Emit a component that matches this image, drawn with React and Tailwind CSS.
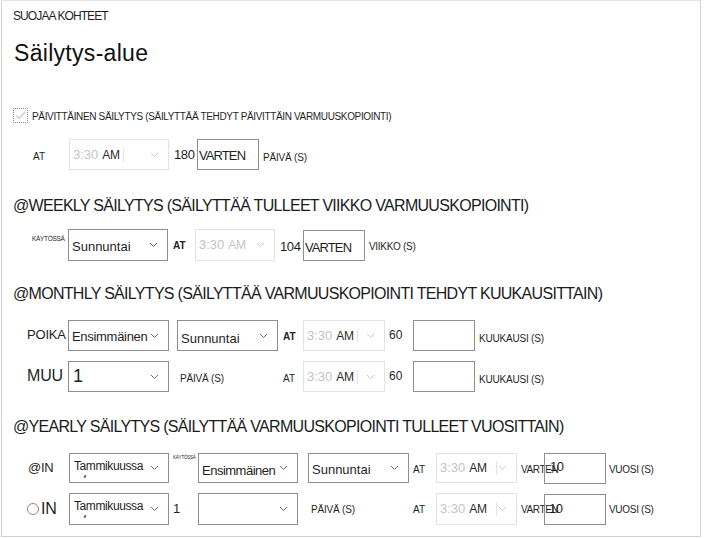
import clsx from 'clsx';

const FONT = "font-['Liberation_Sans',Arial,sans-serif]";

function Chevron({ light }) {
  return (
    <svg width="9" height="6" viewBox="0 0 9 6" className={clsx('flex-none', light ? 'text-[#cacaca]' : 'text-[#6a6a6a]')}>
      <path d="M1 1l3.5 3.5L8 1" fill="none" stroke="currentColor" strokeWidth="1" />
    </svg>
  );
}

function Select({ className, disabled, children, textClass = 'text-[13px]' }) {
  return (
    <div
      className={clsx(
        'flex flex-none items-center border bg-white pl-[3px] pr-[9px]',
        disabled ? 'border-[#e2e2e2]' : 'border-[#8f8f8f]',
        className
      )}
    >
      <div className={clsx('flex min-w-0 flex-1 items-center whitespace-nowrap', textClass)}>{children}</div>
      <Chevron light={disabled} />
    </div>
  );
}

function Time({ allGray, sepClass = 'ml-[3px]' }) {
  return (
    <>
      <span className="text-[#c4c4c4]">3:30</span>
      <span className={clsx('ml-[4px] text-[12px] tracking-[-0.3px]', allGray ? 'text-[#c4c4c4]' : 'text-[#2a2a2a]')}>AM</span>
      {!allGray && <span className={clsx('inline-block h-[14px] w-px bg-[#e4e4e4]', sepClass)} />}
    </>
  );
}

function Box({ className, children }) {
  return (
    <div className={clsx('flex h-[31px] w-[62px] flex-none items-center border border-[#8f8f8f] whitespace-nowrap', className)}>
      {children}
    </div>
  );
}

function Heading({ children, className }) {
  return (
    <div className={clsx('flex h-[24px] items-center whitespace-nowrap pl-[11px] text-[16px] tracking-[-0.7px] text-[#1b1b1b]', className)}>
      {children}
    </div>
  );
}

// month select: label sits high, with a small tick mark under it
function Tammi() {
  return (
    <Select className="h-full w-[100px]" textClass="self-start pt-[5px] text-[12px] tracking-[-0.4px]">
      <div className="flex flex-col">
        <span className="pl-[1px] leading-[14px]">Tammikuussa</span>
        <span className="ml-[11px] mt-[2px] h-[3px] w-[2px] rotate-[30deg] bg-[#666]" />
      </div>
    </Select>
  );
}

export default function App() {
  return (
    <div className={clsx(FONT, 'h-[538px] w-[704px] bg-white text-[#1f1f1f]')}>
      <div className="ml-[1px] h-[537px] w-[700px] border border-[#d2d2d2] border-t-[#e4e4e4]">
        <div className="flex h-[30px] items-center pl-[11px] text-[12px] tracking-[-0.9px]">SUOJAA KOHTEET</div>
        <div className="flex h-[44px] items-center pl-[12px] text-[23px] tracking-[0.3px] text-[#111]">Säilytys-alue</div>

        {/* daily */}
        <div className="mt-[28px] flex h-[24px] items-center pl-[11px]">
          <div className="flex h-[15px] w-[15px] items-center justify-center border border-dotted border-[#8a8a8a]">
            <svg width="11" height="9" viewBox="0 0 11 9">
              <path d="M1 4.5l3 3L10 1" fill="none" stroke="#c8c8c8" strokeWidth="1.2" />
            </svg>
          </div>
          <span className="ml-[4px] pt-[3px] text-[10px] tracking-[-0.35px] whitespace-nowrap">
            PÄIVITTÄINEN SÄILYTYS (SÄILYTTÄÄ TEHDYT PÄIVITTÄIN VARMUUSKOPIOINTI)
          </span>
        </div>
        <div className="mt-[12px] flex h-[31px] items-center">
          <span className="ml-[31px] w-[36px] pt-[4px] text-[10px]">AT</span>
          <Select disabled className="h-full w-[100px]">
            <Time />
          </Select>
          <span className="ml-[5px] w-[23px] text-[13px] tracking-[-0.4px]">180</span>
          <Box className="text-[13px] tracking-[-0.9px] pl-[1px] !items-start pt-[6px]">VARTEN</Box>
          <span className="ml-[4px] pt-[5px] text-[10px] tracking-[-0.2px]">PÄIVÄ (S)</span>
        </div>

        {/* weekly */}
        <Heading className="mt-[24px]">@WEEKLY SÄILYTYS (SÄILYTTÄÄ TULLEET VIIKKO VARMUUSKOPIOINTI)</Heading>
        <div className="mt-[11px] flex h-[32px] items-center">
          <span className="ml-[30px] w-[36px] self-start pt-[6px] text-[6.5px] leading-[8px] tracking-[-0.3px]">KÄYTÖSSÄ</span>
          <Select className="h-full w-[100px]" textClass="pt-[4px] text-[13px]">Sunnuntai</Select>
          <span className="ml-[5px] w-[22px] text-[10px] font-bold">AT</span>
          <Select disabled className="h-full w-[80px]">
            <Time allGray />
          </Select>
          <span className="ml-[5px] w-[23px] pt-[3px] text-[13px] tracking-[-0.4px]">104</span>
          <Box className="h-[30px] text-[13px] tracking-[-0.9px] pl-[1px] pt-[5px]">VARTEN</Box>
          <span className="ml-[4px] pt-[2px] text-[10px] tracking-[-0.3px]">VIIKKO (S)</span>
        </div>

        {/* monthly */}
        <Heading className="mt-[21px]">@MONTHLY SÄILYTYS (SÄILYTTÄÄ VARMUUSKOPIOINTI TEHDYT KUUKAUSITTAIN)</Heading>
        <div className="mt-[14px] flex h-[31px] items-center">
          <span className="ml-[25px] w-[41px] pb-[2px] text-[13px] tracking-[-0.2px]">POIKA</span>
          <Select className="h-full w-[101px]" textClass="self-start pt-[6px] text-[13px] tracking-[-0.3px]">
            Ensimmäinen
          </Select>
          <Select className="ml-[8px] h-full w-[101px]" textClass="pt-[6px] text-[13px]">Sunnuntai</Select>
          <span className="ml-[5px] w-[20px] pt-[2px] text-[10px] font-bold">AT</span>
          <Select disabled className="h-full w-[82px]">
            <Time />
          </Select>
          <span className="ml-[4px] w-[24px] self-start pt-[6px] text-[12px]">60</span>
          <Box className="h-[30px]" />
          <span className="ml-[4px] pt-[5px] text-[10px] tracking-[-0.2px]">KUUKAUSI (S)</span>
        </div>
        <div className="mt-[10px] flex h-[31px] items-center">
          <span className="ml-[25px] w-[41px] pb-[2px] text-[16px] tracking-[-0.2px]">MUU</span>
          <Select className="h-full w-[101px]" textClass="text-[18px]">
            <span className="pl-[1px]">1</span>
          </Select>
          <span className="ml-[11px] w-[103px] pt-[4px] text-[10px] tracking-[-0.2px]">PÄIVÄ (S)</span>
          <span className="w-[20px] pt-[4px] text-[10px]">AT</span>
          <Select disabled className="h-full w-[82px]">
            <Time />
          </Select>
          <span className="ml-[4px] w-[24px] self-start pt-[6px] text-[12px]">60</span>
          <Box className="h-[30px]" />
          <span className="ml-[4px] pt-[5px] text-[10px] tracking-[-0.2px]">KUUKAUSI (S)</span>
        </div>

        {/* yearly */}
        <Heading className="mt-[23px]">@YEARLY SÄILYTYS (SÄILYTTÄÄ VARMUUSKOPIOINTI TULLEET VUOSITTAIN)</Heading>
        <div className="mt-[14px] flex h-[30px] items-center">
          <span className="ml-[26px] w-[41px] text-[13px] tracking-[-0.3px]">@IN</span>
          <Tammi />
          <span className="ml-[4px] w-[25px] self-start pt-[2px] text-[4.5px] leading-[6px] tracking-[-0.2px]">KÄYTÖSSÄ</span>
          <Select className="h-full w-[100px]" textClass="pt-[5px] text-[13px] tracking-[-0.5px]">
            Ensimmäinen
          </Select>
          <Select className="ml-[10px] h-full w-[101px]" textClass="pt-[3px] text-[13px]">Sunnuntai</Select>
          <span className="ml-[4px] w-[23px] pt-[2px] text-[10px]">AT</span>
          <Select disabled className="h-full w-[81px]">
            <Time sepClass="ml-[9px]" />
          </Select>
          <span className="ml-[4px] w-[23px] overflow-visible whitespace-nowrap pt-[2px] text-[10px] tracking-[-0.4px]">VARTEN</span>
          <Box className="h-[30px] pl-[5px] text-[13px] tracking-[-0.6px] !items-start pt-[3px]">10</Box>
          <span className="ml-[3px] pt-[2px] text-[10px] tracking-[-0.3px]">VUOSI (S)</span>
        </div>
        <div className="mt-[10px] flex h-[32px] items-center">
          <div className="ml-[25px] flex w-[42px] items-center">
            <span className="h-[12px] w-[12px] rounded-full border border-[#8a8a8a]" />
            <span className="ml-[2px] text-[16px] tracking-[-0.3px]">IN</span>
          </div>
          <Tammi />
          <span className="ml-[4px] w-[25px] text-[13px] text-[#3a1a1a]">1</span>
          <Select className="h-full w-[100px]"> </Select>
          <span className="ml-[13px] w-[102px] text-[10px] tracking-[-0.2px]">PÄIVÄ (S)</span>
          <span className="w-[23px] text-[10px]">AT</span>
          <Select disabled className="h-full w-[81px]">
            <Time sepClass="ml-[9px]" />
          </Select>
          <span className="ml-[4px] w-[23px] overflow-visible whitespace-nowrap text-[10px] tracking-[-0.4px]">VARTEN</span>
          <Box className="h-[31px] pl-[4px] text-[13px] tracking-[-0.6px]">10</Box>
          <span className="ml-[3px] text-[10px] tracking-[-0.3px]">VUOSI (S)</span>
        </div>
      </div>
    </div>
  );
}
